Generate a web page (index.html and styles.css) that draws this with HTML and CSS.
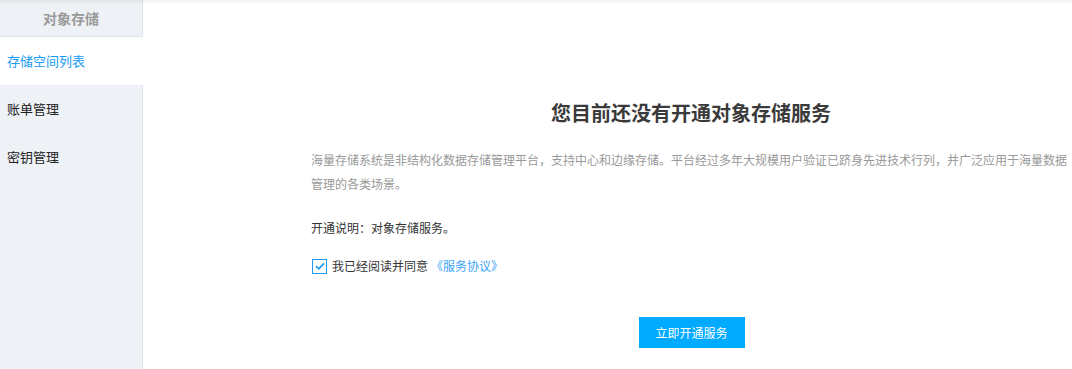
FILE: index.html
```html
<!DOCTYPE html>
<html lang="zh-CN">
<head>
    <meta charset="UTF-8">
    <title>对象存储</title>
    <link rel="stylesheet" href="styles.css">
</head>
<body>
    <div class="layout">
        <div class="sidebar">
            <div class="side-title">对象存储</div>
            <ul class="menu">
                <li class="active">存储空间列表</li>
                <li>账单管理</li>
                <li>密钥管理</li>
            </ul>
        </div>
        <div class="main">
            <div class="open-box">
                <h2>您目前还没有开通对象存储服务</h2>
                <p class="desc">海量存储系统是非结构化数据存储管理平台，支持中心和边缘存储。平台经过多年大规模用户验证已跻身先进技术行列，并广泛应用于海量数据管理的各类场景。</p>
                <p class="note">开通说明：对象存储服务。</p>
                <label class="agree">
                    <span class="check">
                        <svg width="12" height="12" viewBox="0 0 12 12"><path d="M2 6.2 L4.8 8.8 L10 3.4" fill="none" stroke="#1a9cf5" stroke-width="1.8"/></svg>
                    </span>
                    我已经阅读并同意 <a href="#">《服务协议》</a>
                </label>
                <div class="actions">
                    <button>立即开通服务</button>
                </div>
            </div>
        </div>
    </div>
</body>
</html>
```

FILE: styles.css
```css
* {
    box-sizing: border-box;
    margin: 0;
    padding: 0;
}

body {
    font-family: "Microsoft YaHei", "Noto Sans CJK SC", sans-serif;
    font-size: 12px;
    color: #333;
    background: #fff;
    height: 369px;
    overflow: hidden;
}

.layout {
    display: flex;
    height: 369px;
    position: relative;
}

.layout::before {
    content: "";
    position: absolute;
    left: 0;
    right: 0;
    top: 0;
    height: 4px;
    background: linear-gradient(rgba(0,0,0,0.06), rgba(0,0,0,0));
    z-index: 2;
}

.sidebar {
    width: 143px;
    flex: none;
    background: #eef1f5;
    border-right: 1px solid #dfe4ea;
}

.side-title {
    height: 37px;
    line-height: 36px;
    text-align: center;
    font-size: 14px;
    font-weight: bold;
    color: #999;
    border-bottom: 1px solid #dfe4ea;
}

.menu {
    list-style: none;
}

.menu li {
    height: 48px;
    line-height: 48px;
    padding-left: 7px;
    font-size: 13px;
    color: #222;
}

.menu li.active {
    background: #fff;
    color: #1a9cf5;
    margin-right: -1px;
}

.main {
    flex: 1;
    padding-left: 168px;
}

.open-box {
    width: 760px;
    padding-top: 98px;
}

h2 {
    text-align: center;
    font-size: 20px;
    font-weight: bold;
    color: #3a3a3a;
    line-height: 30px;
    margin-bottom: 20px;
}

.desc {
    color: #999;
    line-height: 24px;
    margin-bottom: 20px;
}

.note {
    line-height: 24px;
    margin-bottom: 14px;
}

.agree {
    display: flex;
    align-items: center;
    line-height: 24px;
}

.check {
    width: 15px;
    height: 15px;
    border: 1px solid #1a9cf5;
    background: #fff;
    display: flex;
    align-items: center;
    justify-content: center;
    margin: 0 5px 0 1px;
}

.agree a {
    color: #3aa4f8;
    text-decoration: none;
    margin-left: 3px;
}

.actions {
    display: flex;
    justify-content: center;
    padding-top: 39px;
}

button {
    width: 106px;
    height: 31px;
    border: none;
    background: #00aaff;
    color: #fff;
    font-family: inherit;
    font-size: 12px;
    margin-left: 1px;
}
```
